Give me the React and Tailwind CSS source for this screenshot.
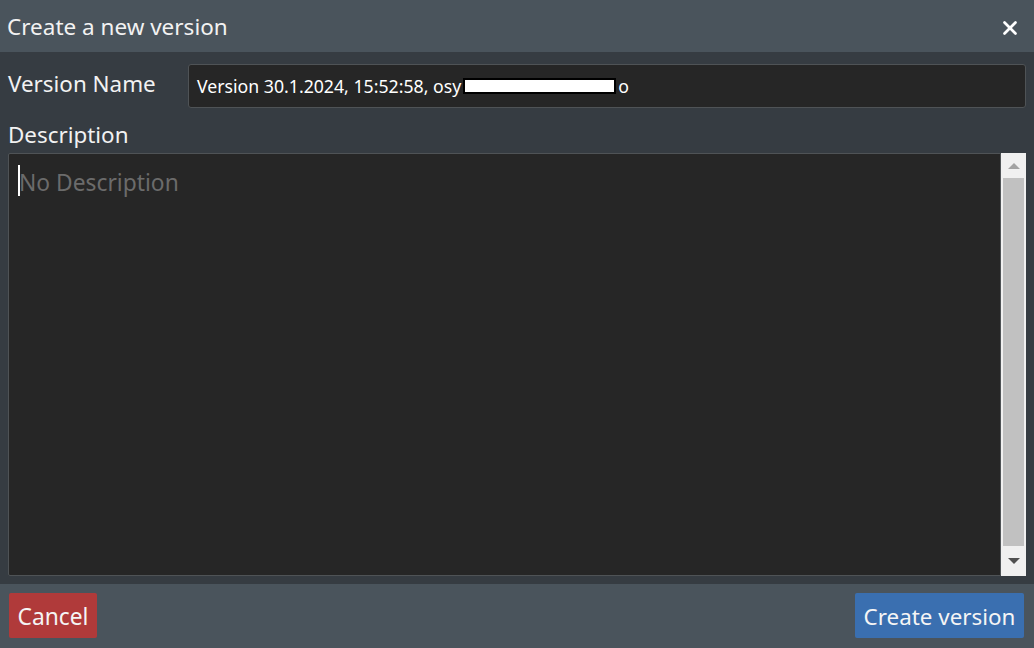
import { X } from "lucide-react";

const font = { fontFamily: '"Noto Sans", "Open Sans", sans-serif' };

export default function App() {
  return (
    <div className="flex h-[648px] w-[1034px] flex-col overflow-hidden bg-[#363c42] text-white" style={font}>
      {/* Header */}
      <header className="flex h-[52px] shrink-0 items-center justify-between bg-[#4a545c] pl-[7px] pr-[13px]">
        <h1 className="pt-[2px] text-[22.5px] leading-none text-[#f2f2f2]">Create a new version</h1>
        <button className="pt-[3px] text-white">
          <X size={22} strokeWidth={3} />
        </button>
      </header>

      {/* Body */}
      <div className="flex flex-1 flex-col px-[8px] pt-[12px] pb-[8px]">
        <div className="flex items-center">
          <label className="w-[180px] pb-[4px] text-[22.4px] text-[#f2f2f2]">Version Name</label>
          <div className="flex h-[44px] flex-1 items-center rounded-[3px] border border-[#4f5356] bg-[#262626] pl-[8px] text-[17.7px] text-white">
            <span>Version 30.1.2024, 15:52:58, osy</span>
            <span className="mx-[2px] h-[16px] w-[153px] border-2 border-black bg-white" />
            <span>o</span>
          </div>
        </div>

        <label className="mt-[11px] text-[22.4px] leading-[32px] text-[#f2f2f2]">Description</label>

        <div className="mt-[2px] flex flex-1">
          <div className="relative flex-1 rounded-l-[2px] border border-[#4f5356] bg-[#262626]">
            <span className="absolute left-[9px] top-[11px] h-[31px] w-[2px] bg-white" />
            <div className="pl-[10px] pt-[18px] text-[22.8px] leading-none text-[#6b6b6b]">No Description</div>
          </div>
          <div className="flex w-[25px] flex-col items-center bg-[#f0f0f0]">
            <div className="flex h-[25px] items-center justify-center">
              <span className="h-0 w-0 border-x-[6px] border-b-[6px] border-x-transparent border-b-[#a3a3a3]" />
            </div>
            <div className="w-[21px] flex-1 bg-[#c1c1c1]" />
            <div className="flex h-[30px] items-center justify-center">
              <span className="h-0 w-0 border-x-[6px] border-t-[6px] border-x-transparent border-t-[#505050]" />
            </div>
          </div>
        </div>
      </div>

      {/* Footer */}
      <footer className="flex h-[64px] shrink-0 items-center justify-between bg-[#4a545c] pl-[9px] pr-[10px] pb-[1px]">
        <button className="h-[45px] w-[88px] rounded-[2px] bg-[#b03a3a] pt-[3px] text-[22.8px] text-[#f5f5f5]">Cancel</button>
        <button className="h-[45px] w-[169px] rounded-[2px] bg-[#3a6fb0] pt-[3px] text-[22.4px] text-[#f5f5f5]">Create version</button>
      </footer>
    </div>
  );
}
